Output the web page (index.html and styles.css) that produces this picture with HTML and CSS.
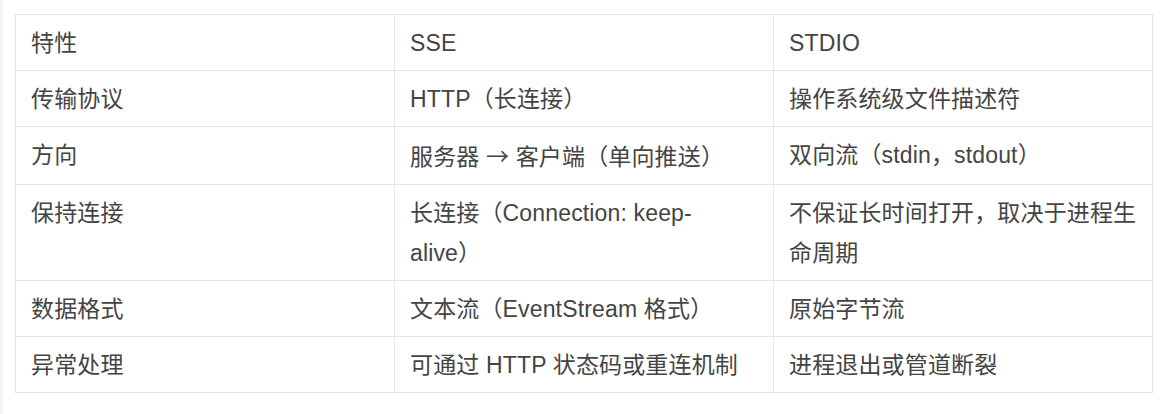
FILE: index.html
```html
<!DOCTYPE html>
<html lang="zh-CN">
<head>
<meta charset="utf-8">
<title>SSE vs STDIO</title>
<link rel="stylesheet" href="styles.css">
</head>
<body>
<div class="page">
  <table class="cmp">
    <colgroup><col class="c"><col class="c"><col class="c"></colgroup>
    <tbody>
      <tr><td>特性</td><td>SSE</td><td>STDIO</td></tr>
      <tr><td>传输协议</td><td>HTTP（长连接）</td><td>操作系统级文件描述符</td></tr>
      <tr><td>方向</td><td>服务器 <span class="arrow">→</span> 客户端（单向推送）</td><td>双向流（stdin，stdout）</td></tr>
      <tr><td>保持连接</td><td>长连接（Connection: keep-alive）</td><td>不保证长时间打开，取决于进程生命周期</td></tr>
      <tr><td>数据格式</td><td>文本流（EventStream 格式）</td><td>原始字节流</td></tr>
      <tr><td>异常处理</td><td>可通过 HTTP 状态码或重连机制</td><td>进程退出或管道断裂</td></tr>
    </tbody>
  </table>
</div>
</body>
</html>
```

FILE: styles.css
```css
html, body {
  margin: 0;
  padding: 0;
  background: #ffffff;
}

.page {
  box-sizing: border-box;
  width: 1173px;
  height: 414px;
  padding: 14px 0 0 12px;
  border-left: 3px solid #f4f4f4;
}

.cmp {
  width: 1138px;
  table-layout: fixed;
  border-collapse: collapse;
  font-family: "Liberation Sans", "Noto Sans CJK SC", sans-serif;
  font-size: 23px;
  line-height: 40px;
  color: #444444;
  text-spacing-trim: space-all;
  letter-spacing: 0.15px;
}

.cmp .c {
  width: 33.333%;
}

.cmp td {
  border: 1px solid #e6e6e6;
  padding: 8px 15px 7px 15px;
  vertical-align: top;
  text-align: left;
  word-break: normal;
}

.arrow {
  font-family: "Noto Sans CJK SC", sans-serif;
}
```
